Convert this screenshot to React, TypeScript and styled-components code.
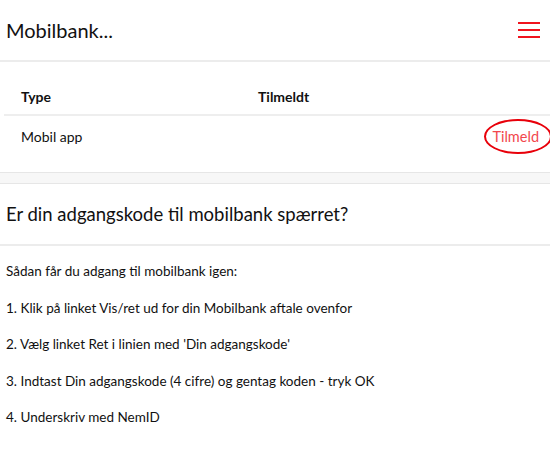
import styled, { createGlobalStyle } from "styled-components";

const GlobalStyle = createGlobalStyle`
  html, body {
    margin: 0;
    padding: 0;
    background: #ffffff;
    font-family: Lato, "Open Sans", sans-serif;
    color: #111;
  }
`;

const Page = styled.div`
  width: 550px;
  display: flex;
  flex-direction: column;
`;

const Header = styled.header`
  height: 62px;
  display: flex;
  align-items: center;
  justify-content: space-between;
  padding: 0 10px 0 6px;
  border-bottom: 2px solid #ececec;
  box-sizing: border-box;
`;

const Title = styled.h1`
  margin: 0;
  font-size: 20px;
  font-weight: 400;
`;

const Burger = styled.button`
  border: none;
  background: none;
  padding: 0;
  width: 22px;
  display: flex;
  flex-direction: column;
  gap: 5px;

  span {
    display: block;
    height: 2px;
    background: #f0141e;
  }
`;

const Table = styled.div`
  padding: 17px 0 16px 4px;
  display: flex;
  flex-direction: column;
`;

const Row = styled.div<{ $head?: boolean }>`
  display: grid;
  grid-template-columns: 237px 1fr auto;
  align-items: center;
  height: ${(p) => (p.$head ? "35px" : "40px")};
  padding-left: 17px;
  font-size: 14px;
  font-weight: ${(p) => (p.$head ? 700 : 400)};
  border-bottom: ${(p) => (p.$head ? "2px solid #eeeeee" : "none")};
`;

const Action = styled.span`
  color: #f2474c;
  font-size: 14.5px;
  border: 2px solid #e8000a;
  border-radius: 50%;
  padding: 7px 11px 7px 6px;
  margin-right: -2px;
`;

const Gap = styled.div`
  height: 10px;
  background: #f7f7f7;
  border-top: 1px solid #e6e6e6;
  border-bottom: 1px solid #e6e6e6;
`;

const SectionTitle = styled.h2`
  margin: 0;
  height: 60px;
  display: flex;
  align-items: center;
  padding-left: 6px;
  font-size: 18.5px;
  font-weight: 400;
  border-bottom: 2px solid #ececec;
`;

const Steps = styled.div`
  padding: 17px 6px;
  display: flex;
  flex-direction: column;
  gap: 20.5px;
  font-size: 13.5px;
`;

const Step = styled.p`
  margin: 0;
  line-height: 16px;
`;

export default function App() {
  return (
    <Page>
      <GlobalStyle />
      <Header>
        <Title>Mobilbank...</Title>
        <Burger aria-label="menu">
          <span />
          <span />
          <span />
        </Burger>
      </Header>
      <Table>
        <Row $head>
          <span>Type</span>
          <span>Tilmeldt</span>
          <span />
        </Row>
        <Row>
          <span>Mobil app</span>
          <span />
          <Action>Tilmeld</Action>
        </Row>
      </Table>
      <Gap />
      <SectionTitle>Er din adgangskode til mobilbank spærret?</SectionTitle>
      <Steps>
        <Step>Sådan får du adgang til mobilbank igen:</Step>
        <Step>1. Klik på linket Vis/ret ud for din Mobilbank aftale ovenfor</Step>
        <Step>2. Vælg linket Ret i linien med 'Din adgangskode'</Step>
        <Step>3. Indtast Din adgangskode (4 cifre) og gentag koden - tryk OK</Step>
        <Step>4. Underskriv med NemID</Step>
      </Steps>
    </Page>
  );
}
